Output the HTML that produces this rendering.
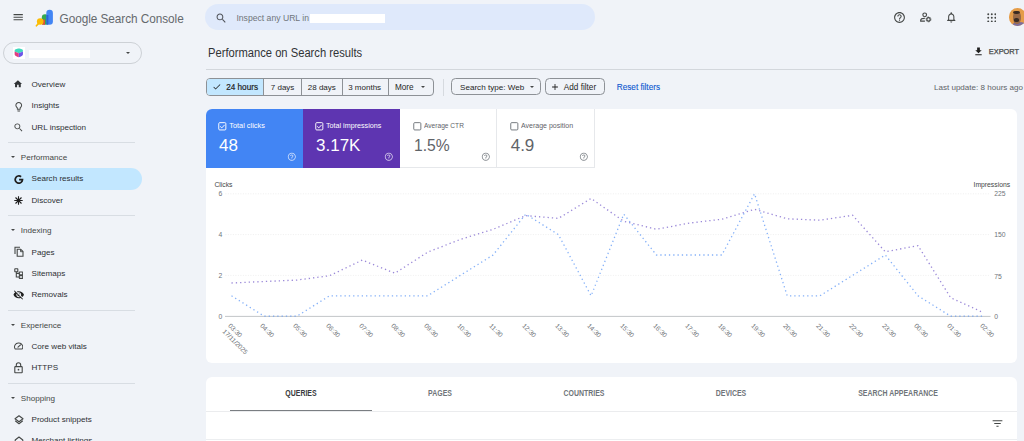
<!DOCTYPE html>
<html><head><meta charset="utf-8">
<style>
*{margin:0;padding:0;box-sizing:border-box}
html,body{width:1024px;height:441px;overflow:hidden;background:#f0f3f8;font-family:"Liberation Sans",sans-serif;color:#1f1f1f}
.a{position:absolute;white-space:nowrap}
svg{position:absolute;display:block}
.nav{position:absolute;left:31.5px;font-size:8.1px;color:#2e3033;line-height:11px;margin-top:-0.6px}
.sec{position:absolute;left:20.8px;font-size:8.1px;color:#444746;line-height:11px;margin-top:0}
.tri{position:absolute;left:11px;width:0;height:0;border-left:2.3px solid transparent;border-right:2.3px solid transparent;border-top:2.6px solid #444746}
.div{position:absolute;left:8px;width:127px;height:1px;background:#d8dde3}
.ic{fill:#444746}
.cl{font-size:7.35px;line-height:9px}
.cv{font-size:17px;line-height:19px}
.ax{font-size:6.8px;line-height:9px;color:#70757a}
.xl{font-size:6.6px;line-height:7.5px;color:#70757a;transform-origin:0 0;transform:rotate(45deg)}
.tb{top:388.4px;font-size:8.4px;line-height:10px;font-weight:bold;color:#70757a;transform:translateX(-50%) scaleX(0.83)}
.fb{font-size:8.2px;line-height:10px;color:#1f1f1f;margin-top:1px}
</style></head><body>

<!-- top bar -->
<svg style="left:11.8px;top:11.3px" width="12.4" height="12.4" viewBox="0 0 24 24"><path class="ic" d="M3 18h18v-2H3v2zm0-5h18v-2H3v2zm0-7v2h18V6H3z"/></svg>
<!-- logo -->
<svg style="left:32px;top:6px" width="26" height="24" viewBox="32 6 26 24">
  <rect x="41.8" y="14.3" width="6.6" height="10.5" rx="3.2" fill="#34a853"/>
  <rect x="42" y="19.5" width="3" height="5.3" fill="#d9533a"/>
  <rect x="46.3" y="9.8" width="6.6" height="15" rx="3.3" fill="#4285f4"/>
  <rect x="46.4" y="15" width="2" height="9.8" fill="#2a66d6"/>
  <circle cx="40.2" cy="21.5" r="3.3" fill="#fbbc04"/>
  <path d="M38.4 23.6 L36.4 25.8" stroke="#fbbc04" stroke-width="1.6" stroke-linecap="round"/>
</svg>
<div class="a" style="left:59.5px;top:9.1px;font-size:11.8px;color:#65696d;line-height:16px;letter-spacing:-0.05px;transform:scaleY(1.14);transform-origin:0 0">Google Search Console</div>

<!-- search bar -->
<div class="a" style="left:205.2px;top:4.3px;width:389.8px;height:26px;border-radius:13px;background:#dfe9fb"></div>
<svg style="left:214.5px;top:11.6px" width="12.5" height="12.5" viewBox="0 0 24 24"><path fill="#50545a" d="M15.5 14h-.79l-.28-.27C15.41 12.59 16 11.11 16 9.5 16 5.91 13.09 3 9.5 3S3 5.91 3 9.5 5.91 16 9.5 16c1.61 0 3.09-.59 4.23-1.57l.27.28v.79l5 4.99L20.49 19l-4.99-5zm-6 0C7.01 14 5 11.99 5 9.5S7.01 5 9.5 5 14 7.01 14 9.5 11.99 14 9.5 14z"/></svg>
<div class="a" style="left:236.4px;top:12.6px;font-size:8.65px;color:#70757a;line-height:11px">Inspect any URL in</div>
<div class="a" style="left:310px;top:14px;width:75px;height:9px;background:#fff"></div>

<!-- top right icons -->
<svg style="left:893px;top:10.9px" width="13" height="13" viewBox="0 0 24 24"><path class="ic" d="M11 18h2v-2h-2v2zm1-16C6.48 2 2 6.48 2 12s4.48 10 10 10 10-4.48 10-10S17.52 2 12 2zm0 18c-4.41 0-8-3.59-8-8s3.59-8 8-8 8 3.59 8 8-3.59 8-8 8zm0-14c-2.21 0-4 1.79-4 4h2c0-1.1.9-2 2-2s2 .9 2 2c0 2-3 1.75-3 5h2c0-2.25 3-2.5 3-5 0-2.21-1.79-4-4-4z"/></svg>
<svg style="left:914px;top:8px" width="24" height="20" viewBox="914 8 24 20">
  <circle cx="924.7" cy="14.85" r="1.85" fill="none" stroke="#444746" stroke-width="1.15"/>
  <path d="M924.8 18.4C922.5 18.4 920.7 19.2 920.7 20.3V21.1H924.9" fill="none" stroke="#444746" stroke-width="1.15"/>
  <circle cx="928.5" cy="19.4" r="1.7" fill="none" stroke="#444746" stroke-width="1.15"/>
  <circle cx="928.5" cy="19.4" r="2.45" fill="none" stroke="#444746" stroke-width="0.9" stroke-dasharray="1.28 1.28"/>
</svg>
<svg style="left:945.2px;top:10.9px" width="12.5" height="12.5" viewBox="0 0 24 24"><path class="ic" d="M12 22c1.1 0 2-.9 2-2h-4c0 1.1.89 2 2 2zm6-6v-5c0-3.070-1.64-5.64-4.5-6.32V4c0-.83-.67-1.5-1.5-1.5s-1.5.67-1.5 1.5v.68C7.63 5.36 6 7.920 6 11v5l-2 2v1h16v-1l-2-2zm-2 1H8v-6c0-2.48 1.510-4.5 4-4.5s4 2.020 4 4.5v6z"/></svg>
<svg style="left:986.6px;top:12.6px" width="9.6" height="9.6" viewBox="0 0 10 10">
  <g fill="#444746"><circle cx="1.3" cy="1.3" r="1"/><circle cx="5" cy="1.3" r="1"/><circle cx="8.7" cy="1.3" r="1"/><circle cx="1.3" cy="5" r="1"/><circle cx="5" cy="5" r="1"/><circle cx="8.7" cy="5" r="1"/><circle cx="1.3" cy="8.7" r="1"/><circle cx="5" cy="8.7" r="1"/><circle cx="8.7" cy="8.7" r="1"/></g>
</svg>
<div class="a" style="left:1008.7px;top:8.4px;width:17.4px;height:17.4px;border-radius:50%;background:#e59c48;overflow:hidden">
  <div class="a" style="left:3px;top:13.5px;width:14px;height:8px;border-radius:45%;background:#7d6f9e"></div>
  <div class="a" style="left:4.5px;top:3px;width:7.5px;height:13px;border-radius:45%;background:#9a6a48"></div>
  <div class="a" style="left:4.5px;top:2.3px;width:7px;height:3.5px;border-radius:40%;background:#3b2a22"></div>
  <div class="a" style="left:5.5px;top:9.8px;width:5px;height:4px;border-radius:40%;background:#3a2c25"></div>
</div>

<!-- sidebar -->
<div class="a" style="left:3px;top:42px;width:139px;height:22px;border-radius:11px;border:1px solid #cdd1d6"></div>
<div class="a" style="left:13px;top:47px;width:12px;height:12px;background:#fff"></div>
<svg style="left:14.3px;top:48.3px" width="9.6" height="9.6" viewBox="0 0 9 9"><path d="M0.6 2.6 Q0.6 1.6 1.6 1.2 L3.8 0.5 Q4.5 0.3 5.2 0.5 L7.4 1.2 Q8.4 1.6 8.4 2.6 L8.4 3.4 L4.5 5 L0.6 3.4Z" fill="#3fd9bd"/><path d="M0.6 3.4 L4.5 5 L4.5 8.6 Q3.8 8.6 3 8.2 L1.4 7.2 Q0.6 6.6 0.6 5.8Z" fill="#e23d80"/><path d="M8.4 3.4 L4.5 5 L4.5 8.6 Q5.2 8.6 6 8.2 L7.6 7.2 Q8.4 6.6 8.4 5.8Z" fill="#6d55e8"/></svg>
<div class="a" style="left:29px;top:50px;width:61px;height:8px;background:#fff"></div>
<div class="a" style="left:125.5px;top:52px;width:0;height:0;border-left:2.8px solid transparent;border-right:2.8px solid transparent;border-top:2.8px solid #444746"></div>


<!-- sidebar icons -->
<div class="a" style="left:0;top:168.3px;width:141.6px;height:21.6px;border-radius:0 11px 11px 0;background:#c2e7ff"></div>

<svg style="left:13.3px;top:79px" width="9.84" height="9.84" viewBox="0 0 24 24"><path fill="#303336" d="M10 20v-6h4v6h5v-8h3L12 3 2 12h3v8z"/></svg>
<svg style="left:12.6px;top:100.5px" width="11.5" height="11.5" viewBox="0 0 24 24"><path fill="#444746" d="M9 21c0 .55.45 1 1 1h4c.55 0 1-.45 1-1v-1H9v1zm3-19C8.14 2 5 5.14 5 9c0 2.38 1.19 4.470 3 5.74V17c0 .55.45 1 1 1h6c.55 0 1-.45 1-1v-2.26c1.81-1.27 3-3.36 3-5.74 0-3.86-3.14-7-7-7zm2.85 11.1l-.85.6V16h-4v-2.3l-.85-.6C7.8 12.16 7 10.63 7 9c0-2.76 2.24-5 5-5s5 2.24 5 5c0 1.63-.8 3.16-2.15 4.1z"/></svg>
<svg style="left:12.6px;top:122px" width="11" height="11" viewBox="0 0 24 24"><path fill="#444746" d="M15.5 14h-.79l-.28-.27C15.41 12.59 16 11.11 16 9.5 16 5.91 13.09 3 9.5 3S3 5.91 3 9.5 5.91 16 9.5 16c1.61 0 3.09-.59 4.23-1.57l.27.28v.79l5 4.99L20.49 19l-4.99-5zm-6 0C7.01 14 5 11.99 5 9.5S7.01 5 9.5 5 14 7.01 14 9.5 11.99 14 9.5 14z"/></svg>
<svg style="left:13.6px;top:174.5px" width="10" height="9" viewBox="0 0 10 9"><path d="M7.1 1.7 A3.65 3.65 0 1 0 8.5 4.6 L5.1 4.6" fill="none" stroke="#1f1f1f" stroke-width="1.75"/></svg>
<svg style="left:14px;top:196px" width="9" height="9" viewBox="0 0 9 9"><g stroke="#1f1f1f" stroke-width="1.1"><path d="M4.5 0.3V8.7M0.3 4.5H8.7M1.5 1.5L7.5 7.5M7.5 1.5L1.5 7.5"/></g><circle cx="4.5" cy="4.5" r="1.4" fill="#1f1f1f"/></svg>
<svg style="left:13.5px;top:246px" width="10" height="11" viewBox="0 0 10 11"><path d="M1 8V1.2H6" fill="none" stroke="#444746" stroke-width="1.1"/><path d="M3.2 3.2H6.7L9 5.5V10.2H3.2Z" fill="none" stroke="#444746" stroke-width="1.1"/><path d="M6.5 3.3V5.7H8.9" fill="none" stroke="#444746" stroke-width="0.9"/></svg>
<svg style="left:13.8px;top:267.8px" width="9.5" height="11" viewBox="0 0 9.5 11"><g fill="none" stroke="#444746" stroke-width="1.1"><rect x="0.8" y="0.8" width="3" height="3" rx="0.3"/><rect x="5.3" y="4" width="3.4" height="2.8" rx="0.3"/><rect x="5.3" y="7.6" width="3.4" height="2.8" rx="0.3"/><path d="M2.3 3.8V9H5.3M2.3 5.4H5.3"/></g></svg>
<svg style="left:12.7px;top:289px" width="11.5" height="11.5" viewBox="0 0 24 24"><path fill="#1f1f1f" d="M12 7c2.76 0 5 2.24 5 5 0 .65-.13 1.26-.36 1.83l2.92 2.92c1.51-1.26 2.7-2.89 3.43-4.75-1.73-4.39-6-7.5-11-7.5-1.4 0-2.74.25-3.98.7l2.16 2.16C10.74 7.13 11.35 7 12 7zM2 4.27l2.28 2.28.46.46C3.080 8.3 1.78 10.02 1 12c1.73 4.39 6 7.5 11 7.5 1.55 0 3.03-.3 4.38-.84l.42.42L19.73 22 21 20.73 3.27 3 2 4.27zM7.53 9.8l1.55 1.55c-.05.21-.08.43-.08.65 0 1.66 1.34 3 3 3 .22 0 .44-.03.65-.08l1.55 1.55c-.67.33-1.41.53-2.2.53-2.76 0-5-2.24-5-5 0-.79.2-1.53.53-2.2zm4.31-.78l3.15 3.15.02-.16c0-1.66-1.34-3-3-3l-.17.01z"/></svg>
<svg style="left:13.7px;top:342.3px" width="9.3" height="7.9" viewBox="0 0 10 8.5"><path d="M1.3 7.6A4.1 4.1 0 0 1 4.9 1.2A4.1 4.1 0 0 1 8.7 7.6Z" fill="none" stroke="#444746" stroke-width="1.1" stroke-linejoin="round"/><path d="M4.3 5.6L7 3.1" stroke="#444746" stroke-width="1.2" stroke-linecap="round"/></svg>
<svg style="left:13.8px;top:362.3px" width="9" height="11.5" viewBox="0 0 9 11.5"><rect x="0.8" y="4.6" width="7.4" height="6.2" rx="0.6" fill="none" stroke="#444746" stroke-width="1.1"/><path d="M2.3 4.6V3A2.2 2.2 0 0 1 6.7 3V4.6" fill="none" stroke="#444746" stroke-width="1.1"/><circle cx="4.5" cy="7.7" r="0.85" fill="#444746"/></svg>
<svg style="left:13.5px;top:414.5px" width="10" height="10" viewBox="0 0 10 10"><path d="M5 0.8L9 3.8L5 6.8L1 3.8Z" fill="none" stroke="#444746" stroke-width="1.1" stroke-linejoin="round"/><path d="M1.2 5.8L5 8.8L8.8 5.8" fill="none" stroke="#444746" stroke-width="1.1" stroke-linejoin="round"/></svg>
<svg style="left:13.5px;top:435.5px" width="10" height="8" viewBox="0 0 10 8"><path d="M1.2 7V4L5 1L8.8 4V7" fill="none" stroke="#444746" stroke-width="1.1" stroke-linejoin="round"/></svg>

<!-- nav items -->
<div class="nav" style="top:79.3px">Overview</div>
<div class="nav" style="top:100.8px">Insights</div>
<div class="nav" style="top:122.4px">URL inspection</div>
<div class="div" style="top:142px"></div>
<div class="tri" style="top:156px"></div><div class="sec" style="top:152px">Performance</div>
<div class="nav" style="top:174px">Search results</div>
<div class="nav" style="top:195.5px">Discover</div>
<div class="div" style="top:215px"></div>
<div class="tri" style="top:229px"></div><div class="sec" style="top:225.2px">Indexing</div>
<div class="nav" style="top:247.2px">Pages</div>
<div class="nav" style="top:268.4px">Sitemaps</div>
<div class="nav" style="top:289.9px">Removals</div>
<div class="div" style="top:309.6px"></div>
<div class="tri" style="top:323.8px"></div><div class="sec" style="top:319.8px">Experience</div>
<div class="nav" style="top:341.6px">Core web vitals</div>
<div class="nav" style="top:363px">HTTPS</div>
<div class="div" style="top:383.1px"></div>
<div class="tri" style="top:397px"></div><div class="sec" style="top:392.9px">Shopping</div>
<div class="nav" style="top:414.3px">Product snippets</div>
<div class="nav" style="top:435.5px">Merchant listings</div>


<!-- main header -->
<div class="a" style="left:208px;top:44.8px;font-size:11.2px;color:#303336;line-height:14px;transform:scaleY(1.06);transform-origin:0 0">Performance on Search results</div>
<svg style="left:972.5px;top:45.5px" width="11" height="11" viewBox="0 0 24 24"><path fill="#1f1f1f" d="M19 9h-4V3H9v6H5l7 7 7-7zM5 18v2h14v-2H5z"/></svg>
<div class="a" style="left:988.8px;top:47px;font-size:7.4px;font-weight:normal;-webkit-text-stroke:0.25px #444746;color:#444746;line-height:10px;letter-spacing:0px">EXPORT</div>
<div class="a" style="left:206px;top:68.6px;width:818px;height:1px;background:#d3d7dc"></div>

<!-- filter bar -->
<div class="a" style="left:206px;top:78.3px;width:228px;height:17.5px;border:1px solid #8d9196;border-radius:4px;overflow:hidden;background:#f0f3f8">
  <div class="a" style="left:0;top:0;width:57px;height:16px;background:#c2e7ff;border-right:1px solid #8d9196"></div>
  <div class="a" style="left:94px;top:0;width:1px;height:16px;background:#8d9196"></div>
  <div class="a" style="left:135px;top:0;width:1px;height:16px;background:#8d9196"></div>
  <div class="a" style="left:181px;top:0;width:1px;height:16px;background:#8d9196"></div>
</div>
<svg style="left:212.1px;top:82px" width="9.6" height="9.6" viewBox="0 0 24 24"><path fill="#1f1f1f" d="M9 16.17L4.83 12l-1.42 1.41L9 19 21 7l-1.41-1.41z"/></svg>
<div class="a fb" style="left:226.2px;top:82px;-webkit-text-stroke:0.2px #1f1f1f">24 hours</div>
<div class="a fb" style="left:270.8px;top:82px;font-size:8px">7 days</div>
<div class="a fb" style="left:307.8px;top:82px;font-size:8px">28 days</div>
<div class="a fb" style="left:348.2px;top:82px;font-size:8px">3 months</div>
<div class="a fb" style="left:395px;top:82px">More</div>
<div class="a" style="left:421px;top:86px;width:0;height:0;border-left:2.6px solid transparent;border-right:2.6px solid transparent;border-top:2.8px solid #444746"></div>
<div class="a" style="left:443px;top:78.5px;width:1px;height:17px;background:#d6dadf"></div>
<div class="a" style="left:451.4px;top:78.2px;width:89.7px;height:17.2px;border:1px solid #8d9196;border-radius:4.5px"></div>
<div class="a fb" style="left:460px;top:81.5px;font-size:8.1px">Search type: Web</div>
<div class="a" style="left:529.5px;top:86px;width:0;height:0;border-left:2.6px solid transparent;border-right:2.6px solid transparent;border-top:2.8px solid #444746"></div>
<div class="a" style="left:545.1px;top:78.2px;width:60.2px;height:17.2px;border:1px solid #8d9196;border-radius:4.5px"></div>
<svg style="left:549.5px;top:82px" width="10" height="10" viewBox="0 0 24 24"><path fill="#1f1f1f" d="M19 13h-6v6h-2v-6H5v-2h6V5h2v6h6v2z"/></svg>
<div class="a fb" style="left:563.8px;top:82px">Add filter</div>
<div class="a fb" style="left:616.8px;top:82px;color:#0b57d0;-webkit-text-stroke:0.1px #0b57d0">Reset filters</div>
<div class="a fb" style="right:1px;top:81.5px;color:#5f6368;font-size:8.05px">Last update: 8 hours ago</div>

<!-- chart panel -->
<div class="a" style="left:205.5px;top:108.8px;width:811.5px;height:254.5px;background:#fff;border-radius:6px;overflow:hidden">
  <div class="a" style="left:0;top:0;width:97px;height:59px;background:#4285f4"></div>
  <div class="a" style="left:97px;top:0;width:97px;height:59px;background:#5e35b1"></div>
  <div class="a" style="left:194px;top:0;width:97.5px;height:59px;border-right:1px solid #e6e8eb;border-bottom:1px solid #e6e8eb"></div>
  <div class="a" style="left:291.5px;top:0;width:97.5px;height:59px;border-right:1px solid #e6e8eb;border-bottom:1px solid #e6e8eb"></div>
</div>

<!-- cards -->
<svg style="left:217.8px;top:121.8px" width="9" height="9" viewBox="0.5 0.5 9 9"><rect x="1.25" y="1.15" width="7.1" height="7.3" rx="1" fill="none" stroke="#fff" stroke-width="0.95"/><path d="M2.7 4.9 L4.3 6.4 L7.1 3.4" fill="none" stroke="#fff" stroke-width="0.95"/></svg>
<div class="a cl" style="left:229.3px;top:120.5px;color:#fff">Total clicks</div>
<div class="a cv" style="left:219px;top:135.5px;color:#fff">48</div>
<svg style="left:286.8px;top:152.2px" width="9.6" height="9.6" viewBox="0 0 24 24"><path fill="#fff" opacity="0.75" d="M11 18h2v-2h-2v2zm1-16C6.48 2 2 6.48 2 12s4.48 10 10 10 10-4.48 10-10S17.52 2 12 2zm0 18c-4.41 0-8-3.590-8-8s3.59-8 8-8 8 3.59 8 8-3.59 8-8 8zm0-14c-2.21 0-4 1.79-4 4h2c0-1.1.9-2 2-2s2 .9 2 2c0 2-3 1.75-3 5h2c0-2.25 3-2.5 3-5 0-2.21-1.79-4-4-4z"/></svg>

<svg style="left:314.8px;top:121.8px" width="9" height="9" viewBox="0.5 0.5 9 9"><rect x="1.25" y="1.15" width="7.1" height="7.3" rx="1" fill="none" stroke="#fff" stroke-width="0.95"/><path d="M2.7 4.9 L4.3 6.4 L7.1 3.4" fill="none" stroke="#fff" stroke-width="0.95"/></svg>
<div class="a cl" style="left:326.3px;top:120.5px;color:#fff;transform:scaleX(0.975);transform-origin:0 0">Total impressions</div>
<div class="a cv" style="left:316px;top:135.5px;color:#fff">3.17K</div>
<svg style="left:383.8px;top:152.2px" width="9.6" height="9.6" viewBox="0 0 24 24"><path fill="#fff" opacity="0.75" d="M11 18h2v-2h-2v2zm1-16C6.48 2 2 6.48 2 12s4.48 10 10 10 10-4.48 10-10S17.52 2 12 2zm0 18c-4.41 0-8-3.590-8-8s3.59-8 8-8 8 3.59 8 8-3.59 8-8 8zm0-14c-2.21 0-4 1.79-4 4h2c0-1.1.9-2 2-2s2 .9 2 2c0 2-3 1.75-3 5h2c0-2.25 3-2.5 3-5 0-2.21-1.79-4-4-4z"/></svg>

<svg style="left:412.8px;top:121.8px" width="9" height="9" viewBox="0.5 0.5 9 9"><rect x="1.25" y="1.15" width="7.1" height="7.3" rx="1" fill="none" stroke="#70757a" stroke-width="0.95"/></svg>
<div class="a cl" style="left:423.8px;top:120.5px;color:#5f6368;transform:scaleX(0.9);transform-origin:0 0">Average CTR</div>
<div class="a cv" style="left:413.7px;top:135.5px;color:#5f6368;transform:scaleX(0.92);transform-origin:0 0">1.5%</div>
<svg style="left:481.4px;top:152.2px" width="9.6" height="9.6" viewBox="0 0 24 24"><path fill="#80868b" d="M11 18h2v-2h-2v2zm1-16C6.48 2 2 6.48 2 12s4.48 10 10 10 10-4.48 10-10S17.52 2 12 2zm0 18c-4.41 0-8-3.590-8-8s3.59-8 8-8 8 3.59 8 8-3.59 8-8 8zm0-14c-2.21 0-4 1.79-4 4h2c0-1.1.9-2 2-2s2 .9 2 2c0 2-3 1.75-3 5h2c0-2.25 3-2.5 3-5 0-2.21-1.79-4-4-4z"/></svg>

<svg style="left:509.9px;top:121.8px" width="9" height="9" viewBox="0.5 0.5 9 9"><rect x="1.25" y="1.15" width="7.1" height="7.3" rx="1" fill="none" stroke="#70757a" stroke-width="0.95"/></svg>
<div class="a cl" style="left:521px;top:120.5px;color:#5f6368;transform:scaleX(0.955);transform-origin:0 0">Average position</div>
<div class="a cv" style="left:510.7px;top:135.5px;color:#5f6368">4.9</div>
<svg style="left:578.6px;top:152.2px" width="9.6" height="9.6" viewBox="0 0 24 24"><path fill="#80868b" d="M11 18h2v-2h-2v2zm1-16C6.48 2 2 6.48 2 12s4.48 10 10 10 10-4.48 10-10S17.52 2 12 2zm0 18c-4.41 0-8-3.590-8-8s3.59-8 8-8 8 3.59 8 8-3.59 8-8 8zm0-14c-2.21 0-4 1.79-4 4h2c0-1.1.9-2 2-2s2 .9 2 2c0 2-3 1.75-3 5h2c0-2.25 3-2.5 3-5 0-2.21-1.79-4-4-4z"/></svg>

<!-- chart -->
<svg style="left:0;top:0" width="1024" height="441" viewBox="0 0 1024 441">
<line x1="225.4" y1="193.8" x2="990.5" y2="193.8" stroke="#ebebeb" stroke-width="0.8" stroke-dasharray="1 1.5"/>
<line x1="225.4" y1="234.6" x2="990.5" y2="234.6" stroke="#ebebeb" stroke-width="0.8" stroke-dasharray="1 1.5"/>
<line x1="225.4" y1="275.4" x2="990.5" y2="275.4" stroke="#ebebeb" stroke-width="0.8" stroke-dasharray="1 1.5"/>
<line x1="225" y1="316.4" x2="990.5" y2="316.4" stroke="#b4b7ba" stroke-width="0.8"/>
<polyline points="231.50,283.00 264.19,281.50 296.88,280.10 329.57,275.70 362.26,260.10 394.95,273.20 427.64,252.20 460.33,239.40 493.02,229.30 525.71,215.60 558.40,218.40 591.09,198.40 623.78,221.30 656.47,229.30 689.16,223.10 721.85,219.20 754.54,209.30 787.23,218.80 819.92,220.20 852.61,215.30 885.30,251.80 917.99,245.60 950.68,297.70 983.37,312.60" fill="none" stroke="#6f55c8" stroke-opacity="0.7" stroke-width="1.3" stroke-dasharray="1.3 3" stroke-linecap="butt"/>
<polyline points="231.50,295.80 264.19,316.20 296.88,316.20 329.57,295.80 362.26,295.80 394.95,295.80 427.64,295.80 460.33,275.40 493.02,255.00 525.71,214.20 558.40,234.60 591.09,295.80 623.78,214.20 656.47,255.00 689.16,255.00 721.85,255.00 754.54,193.80 787.23,295.80 819.92,295.80 852.61,275.40 885.30,255.00 917.99,295.80 950.68,316.20 983.37,316.20" fill="none" stroke="#5b95f5" stroke-opacity="0.75" stroke-width="1.3" stroke-dasharray="1.3 3" stroke-linecap="butt"/>
</svg>
<div class="a ax" style="right:801.8px;top:189.3px">6</div>
<div class="a ax" style="right:801.8px;top:230.1px">4</div>
<div class="a ax" style="right:801.8px;top:270.9px">2</div>
<div class="a ax" style="right:801.8px;top:311.7px">0</div>
<div class="a ax" style="left:994.3px;top:188.6px">225</div>
<div class="a ax" style="left:994.3px;top:230.3px">150</div>
<div class="a ax" style="left:994.3px;top:271.5px">75</div>
<div class="a ax" style="left:994.3px;top:312.1px">0</div>
<div class="a ax" style="left:214.4px;top:180px;color:#444746">Clicks</div>
<div class="a ax" style="left:973.5px;top:180px;color:#444746">Impressions</div>
<div class="a xl" style="left:231.7px;top:321.5px">03:30<br>17/11/2025</div>
<div class="a xl" style="left:264.4px;top:321.5px">04:30</div>
<div class="a xl" style="left:297.1px;top:321.5px">05:30</div>
<div class="a xl" style="left:329.8px;top:321.5px">06:30</div>
<div class="a xl" style="left:362.5px;top:321.5px">07:30</div>
<div class="a xl" style="left:395.1px;top:321.5px">08:30</div>
<div class="a xl" style="left:427.8px;top:321.5px">09:30</div>
<div class="a xl" style="left:460.5px;top:321.5px">10:30</div>
<div class="a xl" style="left:493.2px;top:321.5px">11:30</div>
<div class="a xl" style="left:525.9px;top:321.5px">12:30</div>
<div class="a xl" style="left:558.6px;top:321.5px">13:30</div>
<div class="a xl" style="left:591.3px;top:321.5px">14:30</div>
<div class="a xl" style="left:624.0px;top:321.5px">15:30</div>
<div class="a xl" style="left:656.7px;top:321.5px">16:30</div>
<div class="a xl" style="left:689.4px;top:321.5px">17:30</div>
<div class="a xl" style="left:722.0px;top:321.5px">18:30</div>
<div class="a xl" style="left:754.7px;top:321.5px">19:30</div>
<div class="a xl" style="left:787.4px;top:321.5px">20:30</div>
<div class="a xl" style="left:820.1px;top:321.5px">21:30</div>
<div class="a xl" style="left:852.8px;top:321.5px">22:30</div>
<div class="a xl" style="left:885.5px;top:321.5px">23:30</div>
<div class="a xl" style="left:918.2px;top:321.5px">00:30</div>
<div class="a xl" style="left:950.9px;top:321.5px">01:30</div>
<div class="a xl" style="left:983.6px;top:321.5px">02:30</div>

<!-- tabs panel -->
<div class="a" style="left:205.9px;top:377px;width:811.1px;height:80px;background:#fff;border-radius:6px"></div>
<div class="a" style="left:205.9px;top:411px;width:811.1px;height:1px;background:#ebecee"></div>
<div class="a" style="left:230px;top:409.8px;width:142.3px;height:1.6px;background:#7a7e82"></div>
<div class="a" style="left:205.9px;top:439px;width:811.1px;height:1px;background:#eceef0"></div>
<div class="a tb" style="left:301.4px;color:#3a3c40">QUERIES</div>
<div class="a tb" style="left:440px">PAGES</div>
<div class="a tb" style="left:584px">COUNTRIES</div>
<div class="a tb" style="left:731px">DEVICES</div>
<div class="a tb" style="left:897.5px">SEARCH APPEARANCE</div>
<svg style="left:991px;top:417px" width="13" height="13" viewBox="0 0 24 24"><path fill="#444746" d="M10 18h4v-2h-4v2zM3 6v2h18V6H3zm3 7h12v-2H6v2z"/></svg>
</body></html>
